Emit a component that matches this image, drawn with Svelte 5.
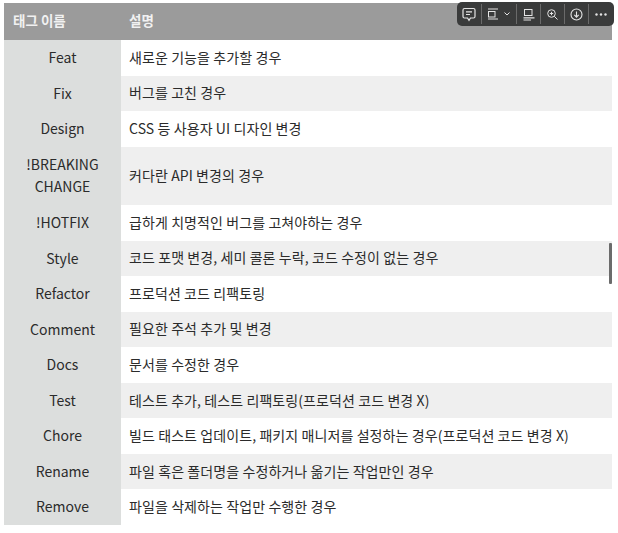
<script>
  const rows = [
    ['Feat', '새로운 기능을 추가할 경우'],
    ['Fix', '버그를 고친 경우'],
    ['Design', 'CSS 등 사용자 UI 디자인 변경'],
    ['!BREAKING CHANGE', '커다란 API 변경의 경우'],
    ['!HOTFIX', '급하게 치명적인 버그를 고쳐야하는 경우'],
    ['Style', '코드 포맷 변경, 세미 콜론 누락, 코드 수정이 없는 경우'],
    ['Refactor', '프로덕션 코드 리팩토링'],
    ['Comment', '필요한 주석 추가 및 변경'],
    ['Docs', '문서를 수정한 경우'],
    ['Test', '테스트 추가, 테스트 리팩토링(프로덕션 코드 변경 X)'],
    ['Chore', '빌드 태스트 업데이트, 패키지 매니저를 설정하는 경우(프로덕션 코드 변경 X)'],
    ['Rename', '파일 혹은 폴더명을 수정하거나 옮기는 작업만인 경우'],
    ['Remove', '파일을 삭제하는 작업만 수행한 경우']
  ];
</script>

<div class="page">
  <div class="table">
    <div class="head">
      <div class="h1">태그 이름</div>
      <div class="h2">설명</div>
    </div>
    {#each rows as [tag, desc], i}
      <div class="row" class:alt={i % 2 === 1} class:tall={i === 3}>
        <div class="tag">{tag}</div>
        <div class="desc">{desc}</div>
      </div>
    {/each}
  </div>

  <div class="toolbar">
    <div class="tb w24 first">
      <svg width="14" height="15" viewBox="0 0 14 15" fill="none" stroke="#e4e4e4" stroke-width="1.200"><path d="M2.500 1.500h9A1.500 1.500 0 0 1 13 3v6.500A1.500 1.500 0 0 1 11.500 11H8.500L7 13.300 5.500 11h-3A1.500 1.500 0 0 1 1 9.500V3a1.500 1.500 0 0 1 1.500-1.500z"/><path d="M4 4.800h6M4 7.500h4"/></svg>
    </div>
    <div class="sep"></div>
    <div class="tb w34">
      <svg width="30" height="12" viewBox="0 0 30 12" fill="none" stroke="#e4e4e4" stroke-width="1"><path d="M4 1h10M4 11h10" stroke-width="1.200"/><rect x="4.500" y="3.500" width="6.500" height="5.500"/><path d="M20.500 4.500l2.500 2.500 2.500-2.500"/></svg>
    </div>
    <div class="sep"></div>
    <div class="tb w23">
      <svg width="12" height="13" viewBox="0 0 12 13" fill="none" stroke="#e4e4e4" stroke-width="1"><rect x="1.500" y="1.500" width="7.500" height="6"/><path d="M0.500 9.800h11M0.500 12h7.500" stroke-width="1.200"/></svg>
    </div>
    <div class="sep"></div>
    <div class="tb w24">
      <svg width="11" height="11" viewBox="0 0 11 11" fill="none" stroke="#e4e4e4" stroke-width="1"><circle cx="4.500" cy="4.500" r="3.800"/><path d="M7.300 7.300L10.500 10.500M2.800 4.500h3.400M4.500 2.800v3.400"/></svg>
    </div>
    <div class="sep"></div>
    <div class="tb w23">
      <svg width="13" height="13" viewBox="0 0 13 13" fill="none" stroke="#e4e4e4" stroke-width="1.100"><circle cx="6.500" cy="6.500" r="5.500"/><path d="M6.500 3.500v5.500M4.300 6.900L6.500 9.100 8.700 6.900"/></svg>
    </div>
    <div class="sep"></div>
    <div class="tb w24">
      <svg width="12" height="3" viewBox="0 0 12 3" fill="#e4e4e4"><circle cx="1.500" cy="1.500" r="1.200"/><circle cx="6" cy="1.500" r="1.200"/><circle cx="10.500" cy="1.500" r="1.200"/></svg>
    </div>
  </div>

  <div class="scroll"></div>
</div>

<style>
  :global(body) {
    margin: 0;
    background: #fff;
  }
  .page {
    position: relative;
    width: 618px;
    height: 533px;
    padding: 3px 6px 0 4px;
    box-sizing: border-box;
    overflow: hidden;
    font-family: "Noto Sans CJK KR", "Noto Sans", sans-serif;
    font-size: 14px;
    color: #2b2b2b;
  }
  .table {
    display: flex;
    flex-direction: column;
    width: 608px;
  }
  .head {
    display: grid;
    grid-template-columns: 117px 1fr;
    height: 37px;
    box-sizing: border-box;
    padding-bottom: 3px;
    background: #9b9b9b;
    color: #f1f1f1;
    font-weight: 700;
    font-size: 13.500px;
    align-items: center;
  }
  .h1 {
    padding-left: 9px;
  }
  .h2 {
    padding-left: 8px;
  }
  .row {
    display: grid;
    grid-template-columns: 117px 1fr;
    height: 35.540px;
    background: #fff;
  }
  .row.alt {
    background: #efefef;
  }
  .row.tall {
    height: 58.500px;
  }
  .tag {
    background: #dcdedd;
    display: flex;
    align-items: center;
    justify-content: center;
    text-align: center;
    line-height: 21.500px;
    padding: 0 16px;
  }
  .desc {
    display: flex;
    align-items: center;
    padding: 0 0 2px 8px;
    box-sizing: border-box;
    white-space: nowrap;
    letter-spacing: 0.090px;
  }
  .toolbar {
    position: absolute;
    left: 457px;
    top: 2px;
    height: 24px;
    width: 157px;
    box-sizing: border-box;
    padding: 0 0 0 1px;
    background: #3a3b3b;
    border-radius: 5px;
    display: flex;
    align-items: center;
  }
  .tb {
    height: 100%;
    display: flex;
    align-items: center;
    justify-content: center;
  }
  .first {
    padding-right: 1px;
    box-sizing: border-box;
  }
  .w24 {
    width: 23px;
  }
  .w34 {
    width: 34px;
  }
  .w23 {
    width: 23px;
  }
  .sep {
    width: 1px;
    height: 20px;
    background: #6a6a6a;
  }
  .scroll {
    position: absolute;
    left: 609px;
    top: 243px;
    width: 3px;
    height: 41px;
    background: #6b6b6b;
    border-radius: 1px;
  }
</style>
